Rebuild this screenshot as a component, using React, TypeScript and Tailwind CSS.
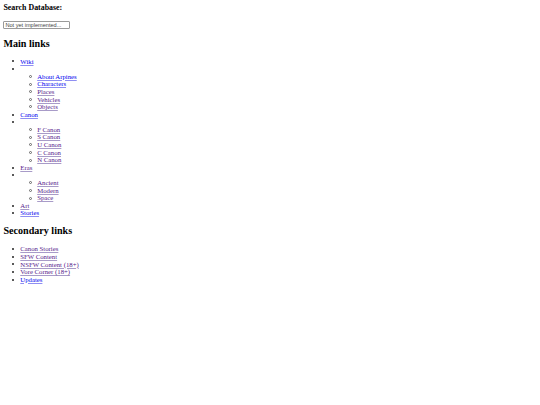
const mainLinks = [
  { label: "Wiki", visited: false },
  {
    children: [
      { label: "About Arpines", visited: false },
      { label: "Characters", visited: false },
      { label: "Places", visited: true },
      { label: "Vehicles", visited: true },
      { label: "Objects", visited: true },
    ],
  },
  { label: "Canon", visited: false },
  {
    children: [
      { label: "F Canon", visited: true },
      { label: "S Canon", visited: true },
      { label: "U Canon", visited: true },
      { label: "C Canon", visited: true },
      { label: "N Canon", visited: true },
    ],
  },
  { label: "Eras", visited: true },
  {
    children: [
      { label: "Ancient", visited: true },
      { label: "Modern", visited: true },
      { label: "Space", visited: true },
    ],
  },
  { label: "Art", visited: true },
  { label: "Stories", visited: false },
];

const secondaryLinks = [
  { label: "Canon Stories", visited: true },
  { label: "SFW Content", visited: true },
  { label: "NSFW Content (18+)", visited: true },
  { label: "Vore Corner (18+)", visited: true },
  { label: "Updates", visited: false },
];

function Link({ label, visited }: { label: string; visited: boolean }) {
  return (
    <a
      href="#"
      className={
        visited
          ? "underline decoration-[#a89bc8] text-[#551a8b]"
          : "underline decoration-[#8f8ff2] text-[#0000ee]"
      }
    >
      {label}
    </a>
  );
}

function Disc() {
  return <span className="-ml-[8px] mr-[6px] h-[2px] w-[2px] shrink-0 rounded-full bg-[#222]" />;
}

function Circle() {
  return <span className="-ml-[8px] mr-[5px] h-[3px] w-[3px] shrink-0 rounded-full border-[0.8px] border-[#666]" />;
}

export default function App() {
  return (
    <div className="min-h-[405px] bg-white p-[3.4px] text-[6.75px] leading-[7.6px] text-black [font-family:'Liberation_Serif',serif]">
      <h3 className="text-[7.9px] leading-[9px] font-bold">Search Database:</h3>
      <input
        readOnly
        value="Not yet implemented..."
        className="mt-[8.4px] block h-[8.4px] w-[67px] border border-[#9a9a9a] rounded-[1px] px-[1px] text-[5.6px] leading-[6px] text-[#444] [font-family:'Liberation_Sans',sans-serif]"
      />

      <h2 className="mt-[8.4px] text-[10.1px] leading-[11.6px] font-bold">Main links</h2>
      <ul className="mt-[8.4px] pl-[16.9px]">
        {mainLinks.map((item, i) =>
          item.children ? (
            <li key={i}>
              <div className="flex items-center">
                <Disc />
                <span>&nbsp;</span>
              </div>
              <ul className="pl-[16.9px]">
                {item.children.map((c) => (
                  <li key={c.label} className="flex items-center">
                    <Circle />
                    <Link label={c.label} visited={c.visited} />
                  </li>
                ))}
              </ul>
            </li>
          ) : (
            <li key={i} className="flex items-center">
              <Disc />
              <Link label={item.label!} visited={item.visited!} />
            </li>
          )
        )}
      </ul>

      <h2 className="mt-[8.4px] text-[10.1px] leading-[11.6px] font-bold">Secondary links</h2>
      <ul className="mt-[8.4px] pl-[16.9px]">
        {secondaryLinks.map((l) => (
          <li key={l.label} className="flex items-center">
            <Disc />
            <Link label={l.label} visited={l.visited} />
          </li>
        ))}
      </ul>
    </div>
  );
}
